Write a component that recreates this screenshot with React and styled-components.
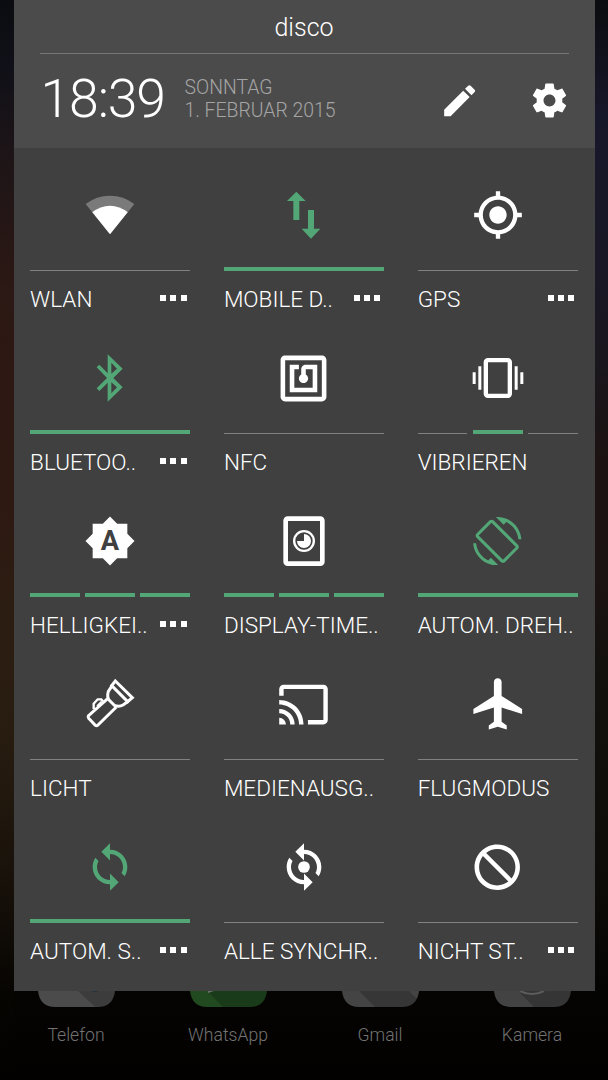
import React from "react";
import styled, { createGlobalStyle } from "styled-components";

const GREEN = "#53a777";

const GlobalStyle = createGlobalStyle`
  body {
    margin: 0;
    background: #000;
  }
`;

const Screen = styled.div`
  box-sizing: border-box;
  width: 608px;
  height: 1080px;
  overflow: hidden;
  display: flex;
  flex-direction: column;
  align-items: center;
  font-family: Roboto, "Noto Sans", sans-serif;
  font-weight: 300;
  color: #fff;
  background:
    linear-gradient(#0b0c10, #101018 6%, #1e1517 15%, #2c1814 27%, #2e1812 45%, #2c1d12 56%, #281c10 68%, #1a130b 80%, #070502 92%, #020100) left / 14px 100% no-repeat,
    linear-gradient(#0b0c10, #17172a 11%, #191725 25%, #19161c 34%, #1c1211 43%, #1b1212 54%, #12110d 62%, #0d0c09 80%, #040402 92%, #020100) right / 14px 100% no-repeat,
    linear-gradient(#0b0c10 80%, #050402 92%, #020100);
`;

const Panel = styled.section`
  width: 581px;
  height: 991px;
  background: #404040;
`;

const Header = styled.header`
  box-sizing: border-box;
  height: 148px;
  padding: 0 26px;
  background: #4b4b4b;
`;

const Carrier = styled.div`
  height: 53px;
  border-bottom: 1px solid #777;
  font-size: 25px;
  line-height: 55px;
  text-align: center;
`;

const HeaderRow = styled.div`
  display: flex;
  align-items: center;
  height: 94px;
`;

const Clock = styled.div`
  width: 144px;
  padding: 0 0 5px 1px;
  font-size: 53.5px;
  line-height: 60px;
  letter-spacing: -1.1px;
  white-space: nowrap;
`;

const DateText = styled.div`
  flex: 1;
  padding-bottom: 3px;
  font-size: 19.4px;
  line-height: 22.5px;
  color: #a5a5a5;
`;

const HeaderIcons = styled.div`
  display: flex;
  gap: 48.5px;
  margin-right: -1px;
`;

const Tiles = styled.div`
  display: grid;
  grid-template-columns: repeat(3, 160px);
  grid-auto-rows: 163px;
  column-gap: 33.8px;
  padding: 35px 16.6px 0;
`;

const Tile = styled.div`
  display: flex;
  flex-direction: column;
`;

const IconBox = styled.div`
  display: flex;
  align-items: center;
  justify-content: center;
  height: 64px;
  color: ${(props) => (props.$on ? GREEN : "#fff")};
`;

const Bars = styled.div`
  display: flex;
  align-items: flex-end;
  gap: 5.4px;
  height: 24.2px;
`;

const Bar = styled.div`
  flex: 1;
  height: ${(props) => (props.$on ? "4px" : "1px")};
  background: ${(props) => (props.$on ? GREEN : "#818181")};
`;

const LabelRow = styled.div`
  display: flex;
  align-items: center;
  justify-content: space-between;
  height: 55px;
  padding-right: 3.5px;
`;

const Label = styled.span`
  font-size: 22.5px;
  line-height: 26px;
  white-space: nowrap;
`;

const Dots = styled.span`
  display: flex;
  gap: 4.2px;
  padding-bottom: 1px;
`;

const Dot = styled.i`
  width: 6px;
  height: 6px;
  background: #fff;
`;

const Dock = styled.nav`
  display: grid;
  grid-template-columns: repeat(4, 152px);
  justify-items: center;
`;

const DockItem = styled.div`
  display: flex;
  flex-direction: column;
  align-items: center;
  gap: 16px;
`;

const DockLabel = styled.span`
  font-size: 17.6px;
  line-height: 24px;
  color: #737373;
`;

const Icon = ({ size, box = "0 0 24 24", children }) => (
  <svg width={size} height={size} viewBox={box} fill="currentColor">
    {children}
  </svg>
);

const icons = {
  wifi: (
    <Icon size={56} box="247 81 168 168">
      <path fill="#7a7a7a" d="M331 223L258 132Q290 107 331 107T404 132z" />
      <path d="M331 223L278 157Q302 137 331 137T384 157z" />
    </Icon>
  ),
  data: (
    <Icon size={56} box="829 81 168 168">
      <path d="M890 95L918 123H899V180H881V123H862z" />
      <path d="M934 236L906 206H925V150H943V206H962z" />
    </Icon>
  ),
  gps: (
    <Icon size={52}>
      <path d="M12 8c-2.21 0-4 1.79-4 4s1.79 4 4 4 4-1.79 4-4-1.79-4-4-4zm8.94 3c-.46-4.17-3.77-7.48-7.94-7.94V1h-2v2.06C6.83 3.52 3.52 6.83 3.06 11H1v2h2.06c.46 4.17 3.77 7.48 7.94 7.94V23h2v-2.06c4.17-.46 7.48-3.77 7.94-7.94H23v-2h-2.06zM12 19c-3.87 0-7-3.13-7-7s3.13-7 7-7 7 3.13 7 7-3.13 7-7 7z" />
    </Icon>
  ),
  bluetooth: (
    <Icon size={56} box="247 59 168 168">
      <path
        fillRule="evenodd"
        d="M324 72L369 115 341 143 369 171 324 214V157L299 182 291 174 322 143 291 111 299 103 324 129zM335 97V130L352 115zM335 156V189L352 171z"
      />
    </Icon>
  ),
  nfc: (
    <Icon size={55}>
      <path d="M20 2H4c-1.1 0-2 .9-2 2v16c0 1.1.9 2 2 2h16c1.1 0 2-.9 2-2V4c0-1.1-.9-2-2-2zm0 18H4V4h16v16zM18 6h-5c-1.1 0-2 .9-2 2v2.28c-.6.35-1 .98-1 1.72 0 1.1.9 2 2 2s2-.9 2-2c0-.74-.4-1.38-1-1.72V8h3v8H8V8h2V6H6v12h12V6z" />
    </Icon>
  ),
  vibrate: (
    <Icon size={56} box="497 60 168 168">
      <rect x="544.5" y="90.5" width="72" height="107" rx="6" fill="none" stroke="currentColor" strokeWidth="13" />
      <path d="M505 127h9v35h-9zM522 109h9v70h-9zM631 109h9v70h-9zM648 127h9v35h-9z" />
    </Icon>
  ),
  brightness: (
    <Icon size={52}>
      <path d="M20 8.69V4h-4.69L12 .69 8.69 4H4v4.69L.69 12 4 15.31V20h4.69L12 23.31 15.31 20H20v-4.69L23.31 12z" />
      <text x="12" y="16.3" fontSize="12.6" fontWeight="700" textAnchor="middle" fill="#404040">
        A
      </text>
    </Icon>
  ),
  timeout: (
    <Icon size={56} box="829 54 168 168">
      <rect x="858" y="71" width="110" height="135" rx="6" fill="none" stroke="currentColor" strokeWidth="14" />
      <circle cx="913" cy="138" r="29.5" fill="none" stroke="currentColor" strokeWidth="7" />
      <path d="M913 138V117A21 21 0 1 1 892 138z" />
    </Icon>
  ),
  rotate: (
    <Icon size={48.5}>
      <path d="M16.48 2.52c3.27 1.55 5.61 4.72 5.97 8.48h1.5C23.44 4.84 18.29 0 12 0l-.66.03 3.81 3.81 1.33-1.32zm-6.25-.77c-.59-.59-1.54-.59-2.12 0L1.75 8.11c-.59.59-.59 1.54 0 2.12l12.02 12.02c.59.59 1.54.59 2.12 0l6.36-6.36c.59-.59.59-1.54 0-2.12L10.23 1.75zm4.6 19.44L2.81 9.17l6.36-6.36 12.02 12.02-6.36 6.36zm-7.31.29C4.25 19.94 1.91 16.76 1.55 13H.05C.56 19.16 5.71 24 12 24l.66-.03-3.81-3.81-1.33 1.32z" />
    </Icon>
  ),
  torch: (
    <Icon size={56} box="249 48 168 168">
      <g fill="none" stroke="currentColor" strokeWidth="9">
        <path d="M349 63L400 113 386 125 338 77z" />
        <path d="M340 76L328 94Q323 111 331 121L346 136Q360 142 372 135L388 124" />
        <path d="M326 116L268 168Q266 172 269 175L289 196Q293 199 297 195L352 141" />
        <path strokeWidth="7" d="M284 147V131L296 118H307L312 124" />
        <path strokeWidth="5" d="M294 138L308 124" />
      </g>
    </Icon>
  ),
  cast: (
    <Icon size={53}>
      <path d="M21 3H3c-1.1 0-2 .9-2 2v3h2V5h18v14h-7v2h7c1.1 0 2-.9 2-2V5c0-1.1-.9-2-2-2zM1 18v3h3c0-1.66-1.34-3-3-3zm0-4v2c2.76 0 5 2.24 5 5h2c0-3.87-3.13-7-7-7zm0-4v2c4.97 0 9 4.03 9 9h2c0-6.08-4.93-11-11-11z" />
    </Icon>
  ),
  plane: (
    <Icon size={61.5} box="-0.5 0 24 24">
      <path d="M21 16v-2l-8-5V3.5c0-.83-.67-1.5-1.5-1.5S10 2.67 10 3.5V9l-8 5v2l8-2.5V19l-2 1.5V22l3.5-1 3.5 1v-1.5L13 19v-5.5l8 2.5z" />
    </Icon>
  ),
  sync: (
    <Icon size={52}>
      <path d="M12 4V1L8 5l4 4V6c3.31 0 6 2.69 6 6 0 1.01-.25 1.97-.7 2.8l1.46 1.46C19.54 15.03 20 13.57 20 12c0-4.42-3.58-8-8-8zm0 14c-3.31 0-6-2.69-6-6 0-1.01.25-1.97.7-2.8L5.24 7.74C4.46 8.97 4 10.43 4 12c0 4.42 3.58 8 8 8v3l4-4-4-4v3z" />
    </Icon>
  ),
  syncAll: (
    <Icon size={52}>
      <path d="M12 4V1L8 5l4 4V6c3.31 0 6 2.69 6 6 0 1.01-.25 1.97-.7 2.8l1.46 1.46C19.54 15.03 20 13.57 20 12c0-4.42-3.58-8-8-8zm0 14c-3.31 0-6-2.69-6-6 0-1.01.25-1.97.7-2.8L5.24 7.74C4.46 8.97 4 10.43 4 12c0 4.42 3.58 8 8 8v3l4-4-4-4v3z" />
      <circle cx="12" cy="12" r="2.7" />
    </Icon>
  ),
  block: (
    <Icon size={54.5}>
      <path
        transform="matrix(-1 0 0 1 24 0)"
        d="M12 2C6.48 2 2 6.48 2 12s4.48 10 10 10 10-4.48 10-10S17.52 2 12 2zM4 12c0-4.42 3.58-8 8-8 1.85 0 3.55.63 4.9 1.69L5.69 16.9C4.63 15.55 4 13.85 4 12zm8 8c-1.85 0-3.55-.63-4.9-1.69L18.31 7.1C19.37 8.45 20 10.15 20 12c0 4.42-3.58 8-8 8z"
      />
    </Icon>
  ),
};

// bars: one entry per level, 1 = lit
const tiles = [
  { label: "WLAN", icon: "wifi", bars: [0], more: true },
  { label: "MOBILE D..", icon: "data", bars: [1], on: true, more: true },
  { label: "GPS", icon: "gps", bars: [0], more: true },
  { label: "BLUETOO..", icon: "bluetooth", bars: [1], on: true, more: true },
  { label: "NFC", icon: "nfc", bars: [0] },
  { label: "VIBRIEREN", icon: "vibrate", bars: [0, 1, 0] },
  { label: "HELLIGKEI..", icon: "brightness", bars: [1, 1, 1], more: true },
  { label: "DISPLAY-TIME..", icon: "timeout", bars: [1, 1, 1] },
  { label: "AUTOM. DREH..", icon: "rotate", bars: [1], on: true },
  { label: "LICHT", icon: "torch", bars: [0] },
  { label: "MEDIENAUSG..", icon: "cast", bars: [0] },
  { label: "FLUGMODUS", icon: "plane", bars: [0] },
  { label: "AUTOM. S..", icon: "sync", bars: [1], on: true, more: true },
  { label: "ALLE SYNCHR..", icon: "syncAll", bars: [0] },
  { label: "NICHT ST..", icon: "block", bars: [0], more: true },
];

const apps = [
  { name: "Telefon", color: "#4b4b4c", shade: "M40 0L57 16H64Q77 14 77 0z", detail: <path d="M53 0Q57 2 61 0z" fill="#26333d" /> },
  { name: "WhatsApp", color: "#214a20", shade: "M19 2L33 16H64Q77 14 77 0H19z", detail: <path d="M18 0H24L18 2z" fill="#65736a" /> },
  { name: "Gmail", color: "#444", shade: "M17 0L33 16H64Q72 15 75 8L67 0z" },
  { name: "Kamera", color: "#434343", shade: "M26 2L40 16H64Q77 14 77 0H26z", detail: <path d="M26 0Q38 6 50 0" fill="none" stroke="#5c5c5c" strokeWidth="2" /> },
];

const QuickTile = ({ label, icon, bars, on, more }) => (
  <Tile>
    <IconBox $on={on}>{icons[icon]}</IconBox>
    <Bars>
      {bars.map((lit, i) => (
        <Bar key={i} $on={lit} />
      ))}
    </Bars>
    <LabelRow>
      <Label>{label}</Label>
      {more && (
        <Dots>
          <Dot />
          <Dot />
          <Dot />
        </Dots>
      )}
    </LabelRow>
  </Tile>
);

export default function App() {
  return (
    <Screen>
      <GlobalStyle />
      <Panel>
        <Header>
          <Carrier>disco</Carrier>
          <HeaderRow>
            <Clock>18:39</Clock>
            <DateText>
              SONNTAG
              <br />
              1. FEBRUAR 2015
            </DateText>
            <HeaderIcons>
              <Icon size={41.3}>
                <path d="M3 17.25V21h3.75L17.81 9.94l-3.75-3.75L3 17.25zM20.71 7.04c.39-.39.39-1.02 0-1.41l-2.34-2.34c-.39-.39-1.02-.39-1.41 0l-1.83 1.83 3.75 3.75 1.83-1.83z" />
              </Icon>
              <Icon size={41}>
                <path d="M19.43 12.98c.04-.32.07-.64.07-.98s-.03-.66-.07-.98l2.11-1.65c.19-.15.24-.42.12-.64l-2-3.46c-.12-.22-.39-.3-.61-.22l-2.49 1c-.52-.4-1.08-.73-1.69-.98l-.38-2.65C14.46 2.18 14.25 2 14 2h-4c-.25 0-.46.18-.49.42l-.38 2.65c-.61.25-1.17.59-1.69.98l-2.49-1c-.23-.09-.49 0-.61.22l-2 3.46c-.13.22-.07.49.12.64l2.11 1.65c-.04.32-.07.65-.07.98s.03.66.07.98l-2.11 1.65c-.19.15-.24.42-.12.64l2 3.46c.12.22.39.3.61.22l2.49-1c.52.4 1.08.73 1.69.98l.38 2.65c.03.24.24.42.49.42h4c.25 0 .46-.18.49-.42l.38-2.65c.61-.25 1.17-.59 1.69-.98l2.49 1c.23.09.49 0 .61-.22l2-3.46c.12-.22.07-.49-.12-.64l-2.11-1.65zM12 15.5c-1.93 0-3.5-1.57-3.5-3.5s1.57-3.5 3.5-3.5 3.5 1.57 3.5 3.5-1.57 3.5-3.5 3.5z" />
              </Icon>
            </HeaderIcons>
          </HeaderRow>
        </Header>
        <Tiles>
          {tiles.map((tile) => (
            <QuickTile key={tile.label} {...tile} />
          ))}
        </Tiles>
      </Panel>
      <Dock>
        {apps.map((app) => (
          <DockItem key={app.name}>
            <svg width="77" height="16" viewBox="0 0 77 16">
              <path d="M0 0Q2 16 17 16H60Q75 16 77 0z" fill={app.color} />
              <path d={app.shade} fill="#000" opacity="0.2" />
              {app.detail}
            </svg>
            <DockLabel>{app.name}</DockLabel>
          </DockItem>
        ))}
      </Dock>
    </Screen>
  );
}
